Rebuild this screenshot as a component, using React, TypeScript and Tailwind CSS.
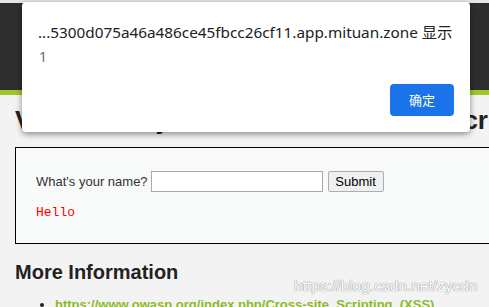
export default function App() {
  return (
    <div className="relative w-[489px] h-[307px] overflow-hidden bg-[#f3f3f3] font-['Liberation_Sans',Arial,sans-serif]">
      <div className="h-[3px] bg-[#e2e8eb]" />
      <div className="h-[87px] bg-[#2e2e2e]" />
      <div className="h-[5px] bg-[#9ec62a]" />

      <div className="pl-[15px]">
        <h1 className="mt-[10px] text-[26px] leading-[30px] font-bold text-[#222] whitespace-nowrap">
          Vulnerability: Reflected Cross Site Scripting (XSS)
        </h1>

        <div className="mt-[12px] h-[97px] border border-black border-r-0 bg-[#f8f9f9] pl-[20px] pt-[23px]">
          <div className="flex items-center text-[13px] text-[#333]">
            <span>What's your name?</span>
            <input className="ml-[3px] w-[172px] h-[21px] border border-[#a9a9a9] bg-white" />
            <button className="ml-[5px] w-[56px] h-[21px] border border-[#adadad] rounded-[2px] bg-[#f0f0f0] text-[13px] text-black">
              Submit
            </button>
          </div>
          <pre className="mt-[13px] text-[13px] leading-[16px] text-[#ff0000] font-['Liberation_Mono',monospace]">Hello</pre>
        </div>

        <h2 className="mt-[16px] text-[20px] leading-[24px] font-bold text-[#222]">More Information</h2>
        <ul className="mt-[11px] pl-[40px] list-disc text-[13px] font-bold">
          <li className="text-[#222]">
            <a className="text-[#8cba2b] underline">https://www.owasp.org/index.php/Cross-site_Scripting_(XSS)</a>
          </li>
        </ul>
      </div>

      <div className="absolute left-[294px] top-[277px] text-[15.5px] leading-[18px] text-white [text-shadow:0_0_1px_#888,0_0_1px_#888] font-['Liberation_Sans',Arial,sans-serif]">
        https://blog.csdn.net/zycdn
      </div>

      <div className="absolute left-[22px] top-[2px] w-[448px] h-[130px] bg-white rounded-[4px] shadow-[0_2px_6px_rgba(0,0,0,0.45)] font-['Noto_Sans','Noto_Sans_CJK_SC',sans-serif]">
        <div className="pl-[16px] pt-[20px] text-[15.3px] leading-[20px] text-[#202124] whitespace-nowrap">
          ...5300d075a46a486ce45fbcc26cf11.app.mituan.zone 显示
        </div>
        <div className="pl-[17px] pt-[6px] text-[14px] leading-[18px] text-[#5f6b7a]">1</div>
        <div className="absolute right-[16px] top-[82px] w-[64px] h-[32px] rounded-[4px] bg-[#1a73e8] flex items-center justify-center text-[13px] text-white font-['Noto_Sans_CJK_SC',sans-serif]">
          确定
        </div>
      </div>
    </div>
  );
}
